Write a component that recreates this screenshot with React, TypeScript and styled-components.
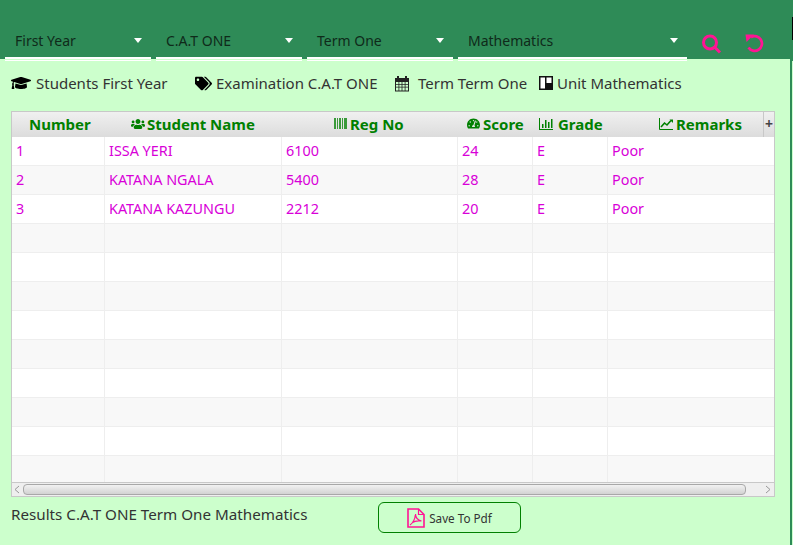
import React from "react";
import styled, { createGlobalStyle } from "styled-components";
import { FaGraduationCap, FaTags, FaUsers, FaTachometerAlt } from "react-icons/fa";

const Global = createGlobalStyle`
  html, body { margin: 0; padding: 0; }
  body { background: #ccffcc; font-family: "Noto Sans", "Open Sans", sans-serif; }
`;

const Page = styled.div`
  width: 793px;
  height: 545px;
  display: flex;
  overflow: hidden;
  background: #ccffcc;
`;
const Main = styled.div`
  width: 790px;
  display: flex;
  flex-direction: column;
`;
const Edge = styled.div`
  width: 3px;
  background:
    linear-gradient(#000, #000) 2px 17px / 1px 23px no-repeat,
    linear-gradient(#ccffcc, #ccffcc) 2px 61px / 1px 100% no-repeat,
    #2e8b57;
`;
const Top = styled.header`
  height: 59px;
  box-sizing: border-box;
  padding: 25px 0 0 5px;
  background: #2e8b57;
  display: flex;
  align-items: flex-start;
  gap: 5px;
`;
const Combo = styled.div<{ $w: number }>`
  width: ${(p) => p.$w}px;
  height: 36px;
  flex: none;
  box-sizing: border-box;
  padding: 0 10px 5px 10px;
  border-bottom: 1px solid #fff;
  background: linear-gradient(#fff, #fff) 0 32px / 100% 2px no-repeat;
  display: flex;
  align-items: center;
  justify-content: space-between;
  font-size: 14px;
  color: #0f2a1a;
`;
const Caret = styled.span`
  width: 0;
  height: 0;
  margin-right: -1px;
  border-left: 4.5px solid transparent;
  border-right: 4.5px solid transparent;
  border-top: 5px solid #fff;
`;
const Tool = styled.button<{ $ml: number }>`
  margin: 9px 0 0 ${(p) => p.$ml}px;
  padding: 0;
  width: 20px;
  height: 20px;
  flex: none;
  background: none;
  border: 0;
  display: flex;
`;
const Info = styled.div`
  height: 48px;
  flex: none;
  box-sizing: border-box;
  padding: 0 0 0 11px;
  margin-bottom: 4px;
  display: flex;
  align-items: center;
  font-size: 15px;
  color: #333;
`;
const InfoItem = styled.span<{ $w: number; $gap: number }>`
  width: ${(p) => p.$w}px;
  flex: none;
  display: flex;
  align-items: center;
  gap: ${(p) => p.$gap}px;
  white-space: nowrap;
  svg { color: #000; flex: none; }
`;
const Table = styled.div`
  width: 764px;
  height: 386px;
  flex: none;
  margin-left: 11px;
  box-sizing: border-box;
  border: 1px solid #c8c8c8;
  background: #fff;
  display: flex;
  flex-direction: column;
`;
const HeadRow = styled.div`
  height: 25px;
  flex: none;
  display: flex;
  background: linear-gradient(#f0f0f0, #dcdcdc);
`;
const HeadCell = styled.div<{ $w: number; $pl: number; $gap: number }>`
  width: ${(p) => p.$w}px;
  flex: none;
  box-sizing: border-box;
  padding: 0 0 2px ${(p) => p.$pl}px;
  display: flex;
  align-items: center;
  gap: ${(p) => p.$gap}px;
  font-size: 15px;
  font-weight: 700;
  color: #008000;
  white-space: nowrap;
  svg { flex: none; }
`;
const Corner = styled.div`
  flex: 1;
  margin-left: -1px;
  padding-bottom: 3px;
  border-left: 1px solid #c8c8c8;
  display: flex;
  align-items: center;
  justify-content: center;
  color: #444;
  font-size: 14px;
  font-weight: 700;
`;
const Rows = styled.div`
  flex: 1;
  overflow: hidden;
`;
const Row = styled.div<{ $odd: boolean }>`
  height: 29px;
  box-sizing: border-box;
  display: flex;
  background: ${(p) => (p.$odd ? "#f8f8f8" : "#fff")};
  border-bottom: 1px solid #eeeeee;
`;
const Cell = styled.div<{ $w: number }>`
  width: ${(p) => p.$w}px;
  flex: none;
  box-sizing: border-box;
  padding: 0 0 2px 4px;
  border-right: 1px solid #eeeeee;
  display: flex;
  align-items: center;
  font-size: 14.4px;
  color: #d800d8;
  white-space: nowrap;
  &:last-child { border-right: 0; }
`;
const HBar = styled.div`
  height: 13px;
  flex: none;
  border-top: 1px solid #c8c8c8;
  background: #efefef;
  display: flex;
  align-items: center;
  gap: 3px;
  padding: 0 3px 0 2px;
`;
const Thumb = styled.div`
  width: 721px;
  height: 9px;
  margin-right: auto;
  border: 1px solid #a8a8a8;
  border-radius: 4px;
  background: linear-gradient(#f2f2f2, #d2d2d2);
`;
const Footer = styled.div`
  flex: 1;
  display: flex;
  align-items: flex-start;
`;
const Summary = styled.div`
  width: 378px;
  flex: none;
  padding: 7px 0 0 11px;
  box-sizing: border-box;
  font-size: 15.2px;
  color: #333;
`;
const SaveButton = styled.button`
  width: 143px;
  height: 31px;
  flex: none;
  margin-top: 5px;
  padding: 0;
  background: transparent;
  border: 1.5px solid #008000;
  border-radius: 6px;
  display: flex;
  align-items: center;
  justify-content: center;
  gap: 4px;
  font: 11.7px "Noto Sans", sans-serif;
  color: #333;
`;

const widths = [93, 177, 176, 75, 75, 156];
const rows: string[][] = [
  ["1", "ISSA YERI", "6100", "24", "E", "Poor"],
  ["2", "KATANA NGALA", "5400", "28", "E", "Poor"],
  ["3", "KATANA KAZUNGU", "2212", "20", "E", "Poor"],
  ...Array.from({ length: 9 }, () => ["", "", "", "", "", ""]),
];

const Search = () => (
  <svg width="20" height="20" viewBox="0 0 20 20" fill="none" stroke="#ff1493">
    <circle cx="8" cy="8.500" r="6.500" strokeWidth="3" />
    <path d="M12.500 13l5.500 5.500" strokeWidth="3" />
  </svg>
);
const Reset = () => (
  <svg width="20" height="20" viewBox="0 0 20 20" fill="none">
    <path d="M6 3.200A7.300 7.300 0 1 1 3.500 13.500" stroke="#ff1493" strokeWidth="2.800" />
    <path d="M.5 .5h8.500L1.500 8z" fill="#ff1493" />
  </svg>
);
const Calendar = () => (
  <svg width="16" height="17" viewBox="0 0 16 17">
    <path fillRule="evenodd" fill="#222" d="M1 3h2V1h2v2h6V1h2v2h2v13.500H1zM2 7v2h2.500V7zm3.300 0v2h2.300V7zm3.100 0v2h2.300V7zm3.100 0v2H14V7zM2 9.800v2h2.500v-2zm3.300 0v2h2.300v-2zm3.100 0v2h2.300v-2zm3.100 0v2H14v-2zM2 12.600v3h2.500v-3zm3.300 0v3h2.300v-3zm3.100 0v3h2.300v-3zm3.100 0v3H14v-3z" />
  </svg>
);
const Unit = () => (
  <svg width="14" height="14" viewBox="0 0 14 14">
    <path fill="#111" d="M0 0h14v14H0z" />
    <path fill="#fff" d="M1.500 1.500H6v11H1.500zM7.500 1.500h5V7h-5z" />
  </svg>
);
const Barcode = () => (
  <svg width="13" height="11" viewBox="0 0 13 11" fill="#3a9a3a">
    <rect x="0" width="2" height="11" /><rect x="3" width="1" height="11" /><rect x="5" width="2" height="11" />
    <rect x="8" width="1" height="11" /><rect x="10" width="3" height="11" />
  </svg>
);
const Bars = () => (
  <svg width="14" height="12" viewBox="0 0 14 12" fill="#008000">
    <path d="M0 0h1v11h13v1H0z" /><rect x="3" y="6" width="1.500" height="4" /><rect x="6" y="2" width="1.500" height="8" /><rect x="9" y="4" width="1.500" height="6" /><rect x="12" y="1" width="1.500" height="9" />
  </svg>
);
const Line = () => (
  <svg width="14" height="12" viewBox="0 0 14 12" fill="none">
    <path d="M.5 0v11.500H14" stroke="#008000" />
    <path d="M2 9l3.500-4 2.500 2 4-4.500" stroke="#008000" strokeWidth="1.600" />
    <path d="M10.500 1.500H14V5z" fill="#008000" />
  </svg>
);
const Pdf = () => (
  <svg width="18" height="20" viewBox="0 0 18 20" fill="none" stroke="#ff1493">
    <path d="M1 1h10.500L17 6.500V19H1z" strokeWidth="1.600" />
    <path d="M11.500 1v5.500H17" strokeWidth="1.200" />
    <path d="M3 17c3-2 5-6 5.500-11 0 3 2 6 6 7-4-.5-7 0-9 1.500" strokeWidth="1.200" />
  </svg>
);

const heads: { label: string; icon?: React.ReactNode; pl: number; gap: number }[] = [
  { label: "Number", pl: 17, gap: 3 },
  { label: "Student Name", icon: <FaUsers size={14} />, pl: 26, gap: 2 },
  { label: "Reg No", icon: <Barcode />, pl: 52, gap: 3 },
  { label: "Score", icon: <FaTachometerAlt size={13} />, pl: 9, gap: 3 },
  { label: "Grade", icon: <Bars />, pl: 6, gap: 5 },
  { label: "Remarks", icon: <Line />, pl: 51, gap: 3 },
];

export default function App() {
  return (
    <Page>
      <Global />
      <Main>
        <Top>
          <Combo $w={146}>First Year<Caret /></Combo>
          <Combo $w={146}>C.A.T ONE<Caret /></Combo>
          <Combo $w={146}>Term One<Caret /></Combo>
          <Combo $w={229}>Mathematics<Caret /></Combo>
          <Tool $ml={10} aria-label="Search"><Search /></Tool>
          <Tool $ml={18} aria-label="Reset"><Reset /></Tool>
        </Top>
        <Info>
          <InfoItem $w={184} $gap={5}><FaGraduationCap size={20} />Students First Year</InfoItem>
          <InfoItem $w={199} $gap={4}><FaTags size={17} />Examination C.A.T ONE</InfoItem>
          <InfoItem $w={145} $gap={8}><Calendar />Term Term One</InfoItem>
          <InfoItem $w={160} $gap={4}><Unit />Unit Mathematics</InfoItem>
        </Info>
        <Table>
          <HeadRow>
            {heads.map((h, i) => (
              <HeadCell key={h.label} $w={widths[i]} $pl={h.pl} $gap={h.gap}>{h.icon}{h.label}</HeadCell>
            ))}
            <Corner>+</Corner>
          </HeadRow>
          <Rows>
            {rows.map((r, i) => (
              <Row key={i} $odd={i % 2 === 1}>
                {r.map((c, j) => <Cell key={j} $w={widths[j]}>{c}</Cell>)}
              </Row>
            ))}
          </Rows>
          <HBar>
            <svg width="6" height="9" viewBox="0 0 6 9" fill="none" stroke="#999"><path d="M5 1L1 4.500 5 8" /></svg>
            <Thumb />
            <svg width="6" height="9" viewBox="0 0 6 9" fill="none" stroke="#999"><path d="M1 1l4 3.500L1 8" /></svg>
          </HBar>
        </Table>
        <Footer>
          <Summary>Results C.A.T ONE Term One Mathematics</Summary>
          <SaveButton><Pdf />Save To Pdf</SaveButton>
        </Footer>
      </Main>
      <Edge />
    </Page>
  );
}
